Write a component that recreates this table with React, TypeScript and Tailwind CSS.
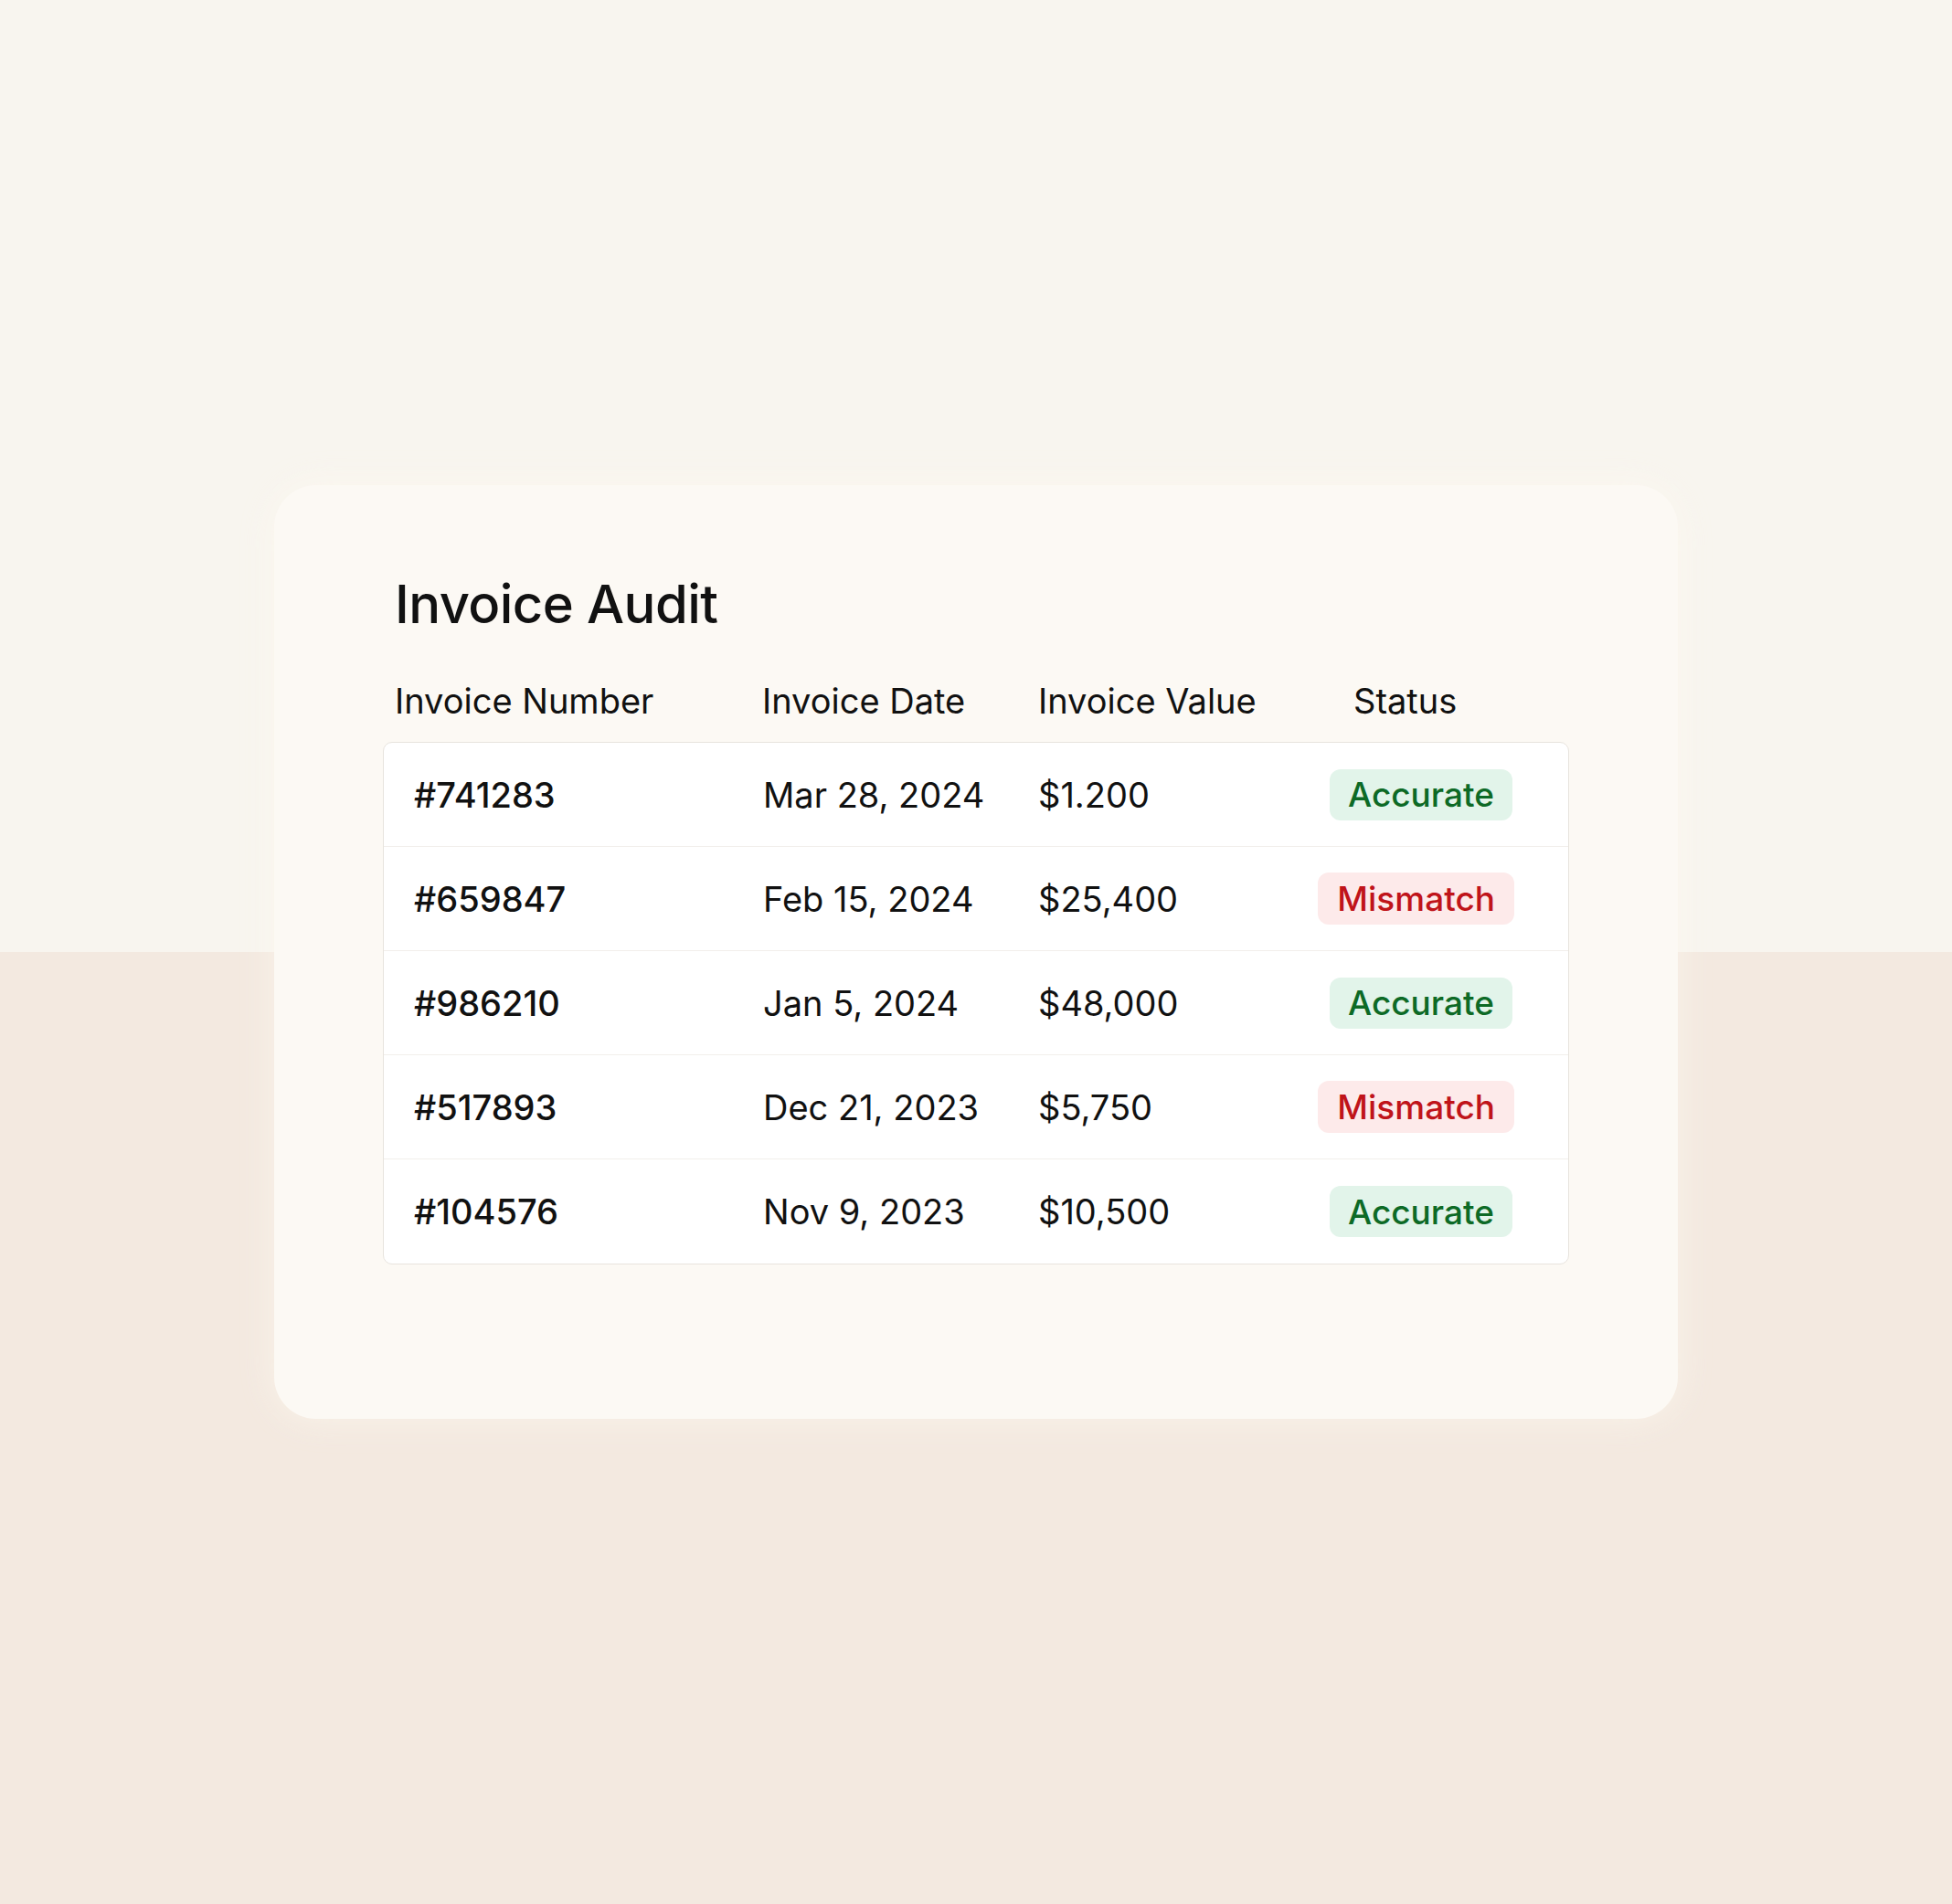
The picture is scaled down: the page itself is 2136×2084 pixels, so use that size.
import React from "react";

type Row = { id: string; date: string; value: string; ok: boolean };

const rows: Row[] = [
  { id: "#741283", date: "Mar 28, 2024", value: "$1.200", ok: true },
  { id: "#659847", date: "Feb 15, 2024", value: "$25,400", ok: false },
  { id: "#986210", date: "Jan 5, 2024", value: "$48,000", ok: true },
  { id: "#517893", date: "Dec 21, 2023", value: "$5,750", ok: false },
  { id: "#104576", date: "Nov 9, 2023", value: "$10,500", ok: true },
];

function Badge({ ok }: { ok: boolean }) {
  return ok ? (
    <span className="mr-[2px] inline-flex h-[56px] items-center rounded-[12px] bg-[#e2f4ea] px-[20px] text-[37px] font-medium leading-none text-[#0d6a26]">
      Accurate
    </span>
  ) : (
    <span className="inline-flex h-[57px] items-center rounded-[12px] bg-[#fdeaea] px-[21px] text-[37px] font-medium leading-none text-[#c0141a]">
      Mismatch
    </span>
  );
}

export default function App() {
  return (
    <div
      className="flex h-[2084px] w-[2136px] items-center justify-center bg-[linear-gradient(to_bottom,#f8f5ef_1042px,#f3e9e0_1042px)] text-[#111111]"
      style={{ fontFamily: "Inter, 'Noto Sans', sans-serif" }}
    >
      <div className="h-[1022px] w-[1536px] rounded-[46px] bg-[#fcf9f4] px-[119px] pt-[101px] shadow-[0_0_40px_rgba(255,250,240,0.6)]">
        <h1 className="pl-[13px] text-[58px] font-medium leading-[58px] tracking-[-0.01em]">
          Invoice Audit
        </h1>
        <div className="mt-[58px] grid grid-cols-[402px_302px_345px_auto] pl-[13px] text-[38px] leading-[38px]">
          <div>Invoice Number</div>
          <div>Invoice Date</div>
          <div>Invoice Value</div>
          <div>Status</div>
        </div>
        <div className="mt-[26px] overflow-hidden rounded-[10px] border border-[#e8e4de] bg-white">
          {rows.map((r, i) => (
            <div
              key={r.id}
              className={`grid h-[114px] grid-cols-[382px_301px_1fr_auto] items-center pl-[33px] pr-[59px] text-[38px] leading-none ${
                i < rows.length - 1 ? "border-b border-[#f2efeb]" : ""
              }`}
            >
              <div className="font-medium">{r.id}</div>
              <div>{r.date}</div>
              <div>{r.value}</div>
              <div className="flex justify-end">
                <Badge ok={r.ok} />
              </div>
            </div>
          ))}
        </div>
      </div>
    </div>
  );
}
